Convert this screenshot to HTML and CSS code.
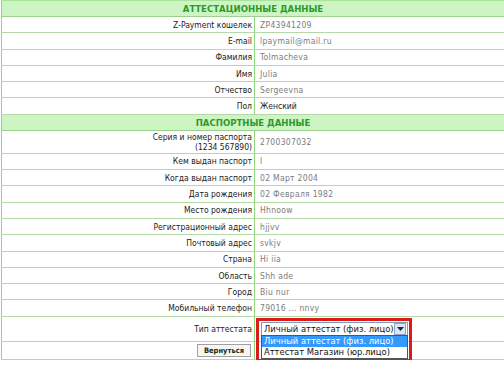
FILE: index.html
```html
<!DOCTYPE html>
<html lang="ru">
<head>
  <meta charset="UTF-8">
  <title>Аттестат</title>
  <link rel="stylesheet" href="styles.css">
</head>
<body>
  <table class="attest">
    <tr class="head"><th colspan="2">Аттестационные данные</th></tr>
    <tr><td class="label">Z-Payment кошелек</td><td class="value"><span class="blur">ZP43941209</span></td></tr>
    <tr><td class="label">E-mail</td><td class="value"><span class="blur">lpaymail@mail.ru</span></td></tr>
    <tr><td class="label">Фамилия</td><td class="value"><span class="blur">Tolmacheva</span></td></tr>
    <tr><td class="label">Имя</td><td class="value"><span class="blur">Julia</span></td></tr>
    <tr><td class="label">Отчество</td><td class="value"><span class="blur">Sergeevna</span></td></tr>
    <tr><td class="label">Пол</td><td class="value">Женский</td></tr>
    <tr class="head"><th colspan="2">Паспортные данные</th></tr>
    <tr><td class="label">Серия и номер паспорта<br>(1234 567890)</td><td class="value"><span class="blur">2700307032</span></td></tr>
    <tr><td class="label">Кем выдан паспорт</td><td class="value"><span class="blur">l</span></td></tr>
    <tr><td class="label">Когда выдан паспорт</td><td class="value"><span class="blur">02 Март 2004</span></td></tr>
    <tr><td class="label">Дата рождения</td><td class="value"><span class="blur">02 Февраля 1982</span></td></tr>
    <tr><td class="label">Место рождения</td><td class="value"><span class="blur">Hhnoow</span></td></tr>
    <tr><td class="label">Регистрационный адрес</td><td class="value"><span class="blur">hjjvv</span></td></tr>
    <tr><td class="label">Почтовый адрес</td><td class="value"><span class="blur">svkjv</span></td></tr>
    <tr><td class="label">Страна</td><td class="value"><span class="blur">Hi iia</span></td></tr>
    <tr><td class="label">Область</td><td class="value"><span class="blur">Shh ade</span></td></tr>
    <tr><td class="label">Город</td><td class="value"><span class="blur">Biu nur</span></td></tr>
    <tr><td class="label">Мобильный телефон</td><td class="value"><span class="blur">79016 ... nnvy</span></td></tr>
    <tr class="type">
      <td class="label">Тип аттестата</td>
      <td class="value">
        <div class="picker">
          <div class="select">
            <span class="select-text">Личный аттестат (физ. лицо)</span>
            <span class="select-btn">
              <svg width="7" height="4" viewBox="0 0 7 4"><path d="M0 0h7L3.5 4z" fill="#1c2a4a"/></svg>
            </span>
          </div>
          <div class="options">
            <div class="option active">Личный аттестат (физ. лицо)</div>
            <div class="option">Аттестат Магазин (юр.лицо)</div>
          </div>
          <div class="mark"></div>
        </div>
      </td>
    </tr>
    <tr class="actions"><td class="label"><button>Вернуться</button></td><td class="value"></td></tr>
  </table>
</body>
</html>
```

FILE: styles.css
```css
* {
  font-family: "DejaVu Sans Condensed", "DejaVu Sans", Verdana, sans-serif;
}

body {
  margin: 0;
  padding-left: 1px;
  background-color: white;
}

.attest {
  width: 503px;
  border-collapse: collapse;
  border-left: 1px solid #8fd47f;
  font-size: 8.5px;
  color: #222;

  tr {
    height: 16.3px;
  }

  .head {
    height: 16px;
  }

  th {
    padding: 0;
    background-color: #cdf5c4;
    border-top: 1px solid #a9e39b;
    border-bottom: 1px solid #9ccf8d;
    color: #2b9a2b;
    font-size: 9.5px;
    font-weight: bold;
    text-transform: uppercase;
  }

  td {
    padding: 1px 0;
    border-bottom: 1px solid #b4d8a6;
    vertical-align: middle;
    white-space: nowrap;
  }

  .label {
    width: 250px;
    padding-right: 2px;
    text-align: right;
    border-right: 1px solid #8fd47f;
  }

  .value {
    padding-left: 5px;
  }

  .blur {
    color: #7c7c7c;
    letter-spacing: 0.3px;
  }

  .type {
    height: 25px;
  }

  .actions {
    height: 18px;
  }
}

.actions button {
  font-size: 7.5px;
  font-weight: bold;
  color: #1a2a1a;
  background-color: #f6f6f2;
  border: 1px solid #a0a0a0;
  padding: 1px 6px;
  margin: 0 1px 0 0;
}

.picker {
  position: relative;
  width: 147px;
  margin-left: 1px;
}

.select {
  display: flex;
  align-items: center;
  justify-content: space-between;
  height: 12px;
  border: 1px solid #7f9db9;
  background-color: white;
  padding-left: 2px;

  .select-text {
    overflow: hidden;
    font-family: "DejaVu Sans", Verdana, sans-serif;
    font-size: 8.4px;
    color: #111;
  }

  .select-btn {
    flex-shrink: 0;
    display: flex;
    align-items: center;
    justify-content: center;
    width: 10px;
    height: 10px;
    margin-right: 1px;
    border: 1px solid #8da2c4;
    background-color: #dfe6f3;
  }
}

.options {
  position: absolute;
  top: 13px;
  left: 0;
  right: 0;
  border: 1px solid #555;
  background-color: white;

  .option {
    padding-left: 2px;
    height: 11px;
    line-height: 11px;
    font-family: "DejaVu Sans", Verdana, sans-serif;
    font-size: 8.4px;
    color: #111;
  }

  .active {
    background-color: #3399ff;
    color: white;
  }
}

.mark {
  position: absolute;
  top: -4px;
  left: -5px;
  width: 150px;
  height: 38px;
  border: 3px solid #dd1a1a;
}
```
